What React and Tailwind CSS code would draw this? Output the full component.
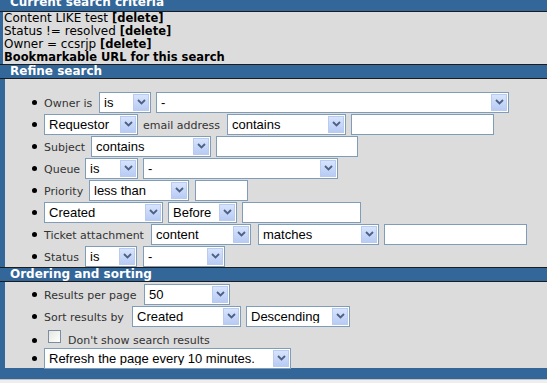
import React from "react";

function Chevron() {
  return (
    <span className="mr-[1px] flex h-[17px] w-[16px] shrink-0 items-center justify-center border border-[#b9cbf0] bg-gradient-to-b from-[#d8e4fc] to-[#b7cbf4]">
      <svg width="9" height="6" viewBox="0 0 9 6">
        <path d="M1 1 L4.5 4.5 L8 1" fill="none" stroke="#4d6185" strokeWidth="1.8" />
      </svg>
    </span>
  );
}

function Select({ className = "", children }) {
  return (
    <div
      className={`flex h-[21px] shrink-0 items-center border border-[#7f9db9] bg-white pl-[4px] font-['Liberation_Sans',Arial,sans-serif] text-[13px] leading-none text-black ${className}`}
    >
      <span className="flex-1 truncate">{children}</span>
      <Chevron />
    </div>
  );
}

function Input({ className = "" }) {
  return <div className={`h-[21px] shrink-0 border border-[#7f9db9] bg-white ${className}`} />;
}

function Label({ className = "", children }) {
  return <span className={`shrink-0 text-[11px] text-[#333] ${className}`}>{children}</span>;
}

function Row({ className = "h-[22px]", bullet = "", children }) {
  return (
    <li className={`flex items-center pl-[27px] ${className}`}>
      <span className={`mr-[7px] h-[5px] w-[5px] shrink-0 rounded-full bg-black ${bullet}`} />
      {children}
    </li>
  );
}

function Title({ children }) {
  return (
    <div className="h-[15px] border-y border-[#1c1c1c] bg-[#336699] pl-[10px] text-[12px] font-bold leading-[13px] text-white">
      {children}
    </div>
  );
}

export default function App() {
  return (
    <div className="h-[383px] w-[547px] overflow-hidden bg-[#eeeeee] font-['DejaVu_Sans',Verdana,sans-serif]">
      {/* current search criteria */}
      <div className="h-[12px] overflow-hidden border-b border-[#1c1c1c] bg-[#336699] pl-[10px] text-[12px] font-bold leading-[13px] text-white">
        <div className="-mt-[4px]">Current search criteria</div>
      </div>
      <div className="h-[52px] border-l-[3px] border-[#336699] bg-[#dcdcdc] pl-[1px] text-[12px] leading-[13px] text-black">
        <div>
          Content LIKE test <b className="text-[11.5px]">[delete]</b>
        </div>
        <div>
          Status != resolved <b className="text-[11.5px]">[delete]</b>
        </div>
        <div>
          Owner = ccsrjp <b className="text-[11.5px]">[delete]</b>
        </div>
        <div className="text-[11.5px] font-bold">Bookmarkable URL for this search</div>
      </div>

      {/* refine search */}
      <Title>Refine search</Title>
      <ul className="h-[188px] border-l-[5px] border-[#336699] bg-[#dcdcdc] pt-[12px]">
        <Row>
          <Label className="mt-[4px] w-[55px]">Owner is</Label>
          <Select className="w-[52px]">is</Select>
          <Select className="ml-[5px] w-[353px]">-</Select>
        </Row>
        <Row>
          <Select className="w-[94px]">Requestor</Select>
          <Label className="ml-[5px] mt-[4px] w-[84px]">email address</Label>
          <Select className="w-[119px]">contains</Select>
          <Input className="ml-[5px] w-[143px]" />
        </Row>
        <Row>
          <Label className="mt-[4px] w-[47px]">Subject</Label>
          <Select className="w-[120px]">contains</Select>
          <Input className="ml-[5px] w-[142px]" />
        </Row>
        <Row>
          <Label className="mt-[4px] w-[41px]">Queue</Label>
          <Select className="w-[53px]">is</Select>
          <Select className="ml-[5px] w-[195px]">-</Select>
        </Row>
        <Row>
          <Label className="mt-[4px] w-[45px]">Priority</Label>
          <Select className="w-[100px]">less than</Select>
          <Input className="ml-[6px] w-[53px]" />
        </Row>
        <Row>
          <Select className="w-[119px]">Created</Select>
          <Select className="ml-[5px] w-[69px]">Before</Select>
          <Input className="ml-[5px] w-[119px]" />
        </Row>
        <Row>
          <Label className="mt-[4px] w-[107px]">Ticket attachment</Label>
          <Select className="w-[100px]">content</Select>
          <Select className="ml-[7px] w-[121px]">matches</Select>
          <Input className="ml-[5px] w-[143px]" />
        </Row>
        <Row>
          <Label className="mt-[4px] w-[41px]">Status</Label>
          <Select className="w-[52px]">is</Select>
          <Select className="ml-[6px] w-[82px]">-</Select>
        </Row>
      </ul>

      {/* ordering and sorting */}
      <Title>Ordering and sorting</Title>
      <ul className="h-[86px] border-l-[5px] border-[#336699] bg-[#dcdcdc] pt-[1px]">
        <Row>
          <Label className="mt-[4px] w-[100px] text-[11.3px]">Results per page</Label>
          <Select className="w-[86px]">50</Select>
        </Row>
        <Row>
          <Label className="mt-[4px] w-[88px] text-[11.3px]">Sort results by</Label>
          <Select className="w-[109px]">Created</Select>
          <Select className="ml-[5px] w-[104px]">Descending</Select>
        </Row>
        <Row className="h-[21px]" bullet="mt-[5px]">
          <span className="mb-[3px] ml-[4px] h-[13px] w-[13px] shrink-0 border border-[#7a8da1] bg-gradient-to-br from-[#e6e6e0] to-white" />
          <Label className="ml-[7px] mt-[8px] text-[11.4px]">Don't show search results</Label>
        </Row>
        <Row className="h-[20px]">
          <Select className="h-[20px] w-[247px]">Refresh the page every 10 minutes.</Select>
        </Row>
      </ul>
      <div className="h-[11px] bg-[#336699]" />
      <div className="h-[4px] border-t border-[#c4c4c4] bg-[#eeeeee]" />
    </div>
  );
}
